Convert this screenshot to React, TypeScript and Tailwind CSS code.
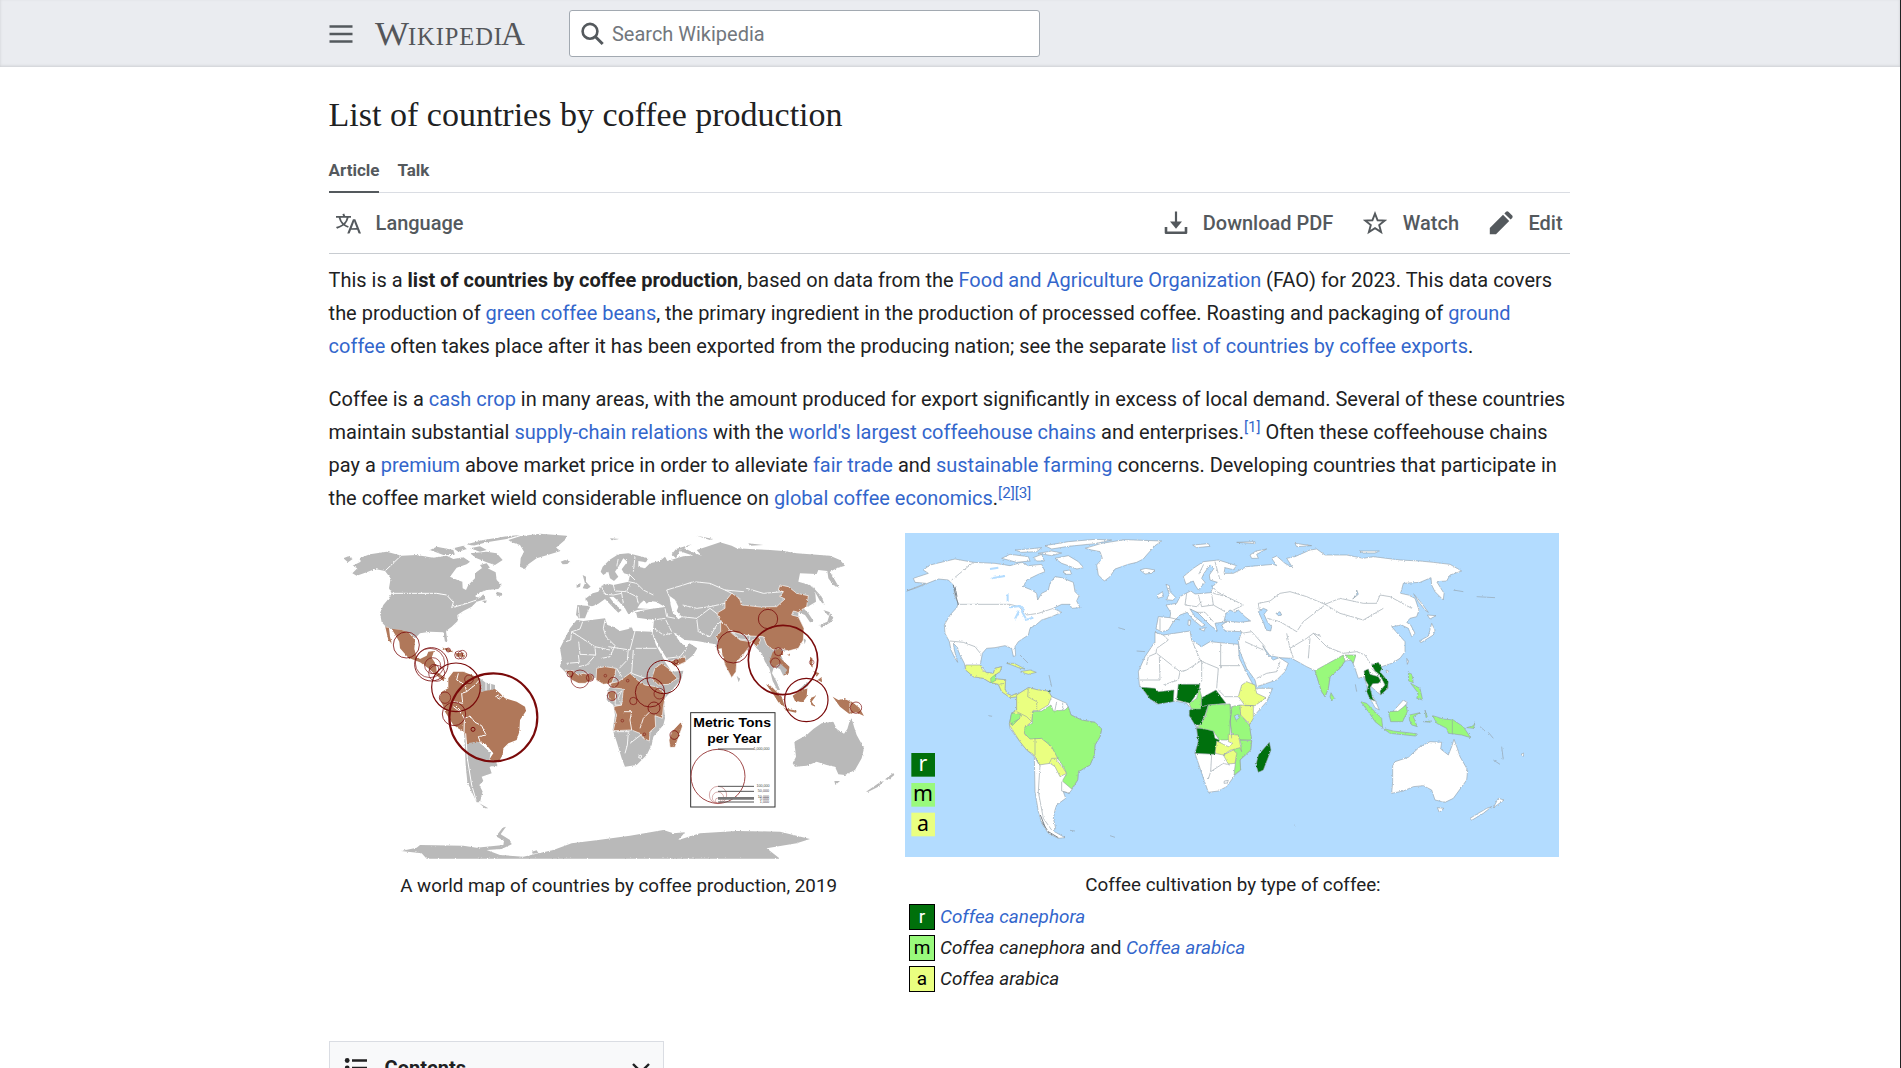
import React from "react";

const GRAY = "#b9b9b9";
const BROWN = "#b0785a";
const RING = "#7a0a0a";

function Link({ children }: { children: React.ReactNode }) {
  return <a className="text-[#3366cc]">{children}</a>;
}

function Rough({ id, scale }: { id: string; scale: number }) {
  return (
    <filter id={id} x="0" y="0" width="100%" height="100%">
      <feTurbulence type="fractalNoise" baseFrequency="0.22" numOctaves="2" seed="4" result="n" />
      <feDisplacementMap in="SourceGraphic" in2="n" scale={scale} xChannelSelector="R" yChannelSelector="G" />
    </filter>
  );
}

const americasRings: [number, number, number, number][] = [
  [259, 360, 39, 2.4], [334, 418, 50, 2.6], [330, 414, 44, 2], [338, 422, 24, 2], [350, 445, 24, 2], [342, 432, 14, 2],
  [427, 389, 13, 2], [416, 390, 12, 2], [385, 375, 6, 2], [408, 487, 73, 3.6], [520, 577, 132, 6.5], [402, 567, 35, 2.4],
  [375, 518, 17, 2], [459, 613, 6, 3], [447, 463, 13, 2],
];
const eastRings: [number, number, number, number][] = [
  [550, 366, 48, 2.6], [654, 282, 29, 2.4], [699, 405, 104, 5], [769, 525, 65, 3.6], [918, 548, 17, 2], [676, 413, 14, 2],
  [685, 380, 12, 2], [341, 456, 50, 3], [300, 502, 44, 2.6], [312, 549, 18, 2.4], [328, 506, 16, 2], [90, 462, 27, 2],
  [190, 472, 15, 2], [186, 513, 14, 2], [250, 528, 11, 2], [373, 630, 13, 2.4], [233, 467, 4, 1.5], [166, 452, 4, 1.5],
  [217, 587, 4, 1.5], [283, 628, 4, 1.5], [120, 458, 11, 2], [60, 447, 9, 2], [378, 410, 6, 2], [785, 412, 7, 1.5],
];

function ProductionMap() {
  return (
    <svg className="block h-[327px] w-[569px]" viewBox="27 24 1707 981">
      <defs><Rough id="coast-a" scale={7} /></defs>
      <g filter="url(#coast-a)" strokeLinejoin="round">
        <g fill={GRAY}>
          <path d="M97,145 112,130 98,122 122,110 118,100 150,88 200,80 245,92 290,90 340,98 380,92 400,102 430,97 450,110 440,118 410,128 390,155 414,166 427,170 428,190 438,195 445,180 465,160 465,145 485,130 500,128 527,142 530,165 545,180 535,192 500,195 470,206 465,215 480,218 490,208 498,222 470,230 455,245 430,258 412,270 413,288 395,305 378,318 382,348 375,350 370,322 330,320 300,325 285,340 265,322 245,315 215,312 198,305 185,292 180,265 190,240 205,222 215,205 207,190 212,160 195,138 165,132 140,142 110,152Z" />
          <path d="M330,75 350,65 400,75 405,90 370,90ZM400,70 430,62 440,72 415,80ZM450,70 480,64 500,75 480,80ZM440,58 490,45 560,34 600,30 560,42 500,52 460,62ZM450,85 500,80 530,85 548,105 525,120 500,112 470,100ZM480,120 500,115 510,128 488,132ZM70,100 85,94 98,102 84,112ZM530,200 548,205 545,212 530,212ZM722,110 735,105 750,109 742,117 728,118ZM485,228 500,226 498,234Z" />
          <path d="M565,45 600,34 660,26 740,32 735,45 708,68 722,78 690,88 650,100 625,118 615,132 600,125 602,100 612,80 600,60 575,52Z" />
          <path d="M480,460 495,472 525,480 525,495 482,500ZM432,620 440,652 475,650 512,682 508,705 530,712 532,724 508,724 515,745 485,755 490,768 478,780 488,800 480,832 470,832 455,800 442,770 437,720ZM478,835 505,850 495,850Z" />
          <path d="M243,978 290,968 300,960 430,962 470,968 550,960 552,948 528,934 548,908 558,905 542,928 570,945 575,958 545,972 500,975 540,990 610,995 700,975 755,955 835,945 930,932 1030,915 1060,925 1095,922 1075,945 1140,925 1250,918 1380,920 1470,942 1430,955 1340,970 1380,1001 320,1001 305,985ZM635,980 650,976 655,984 640,986Z" />
        </g>
        <g fill={BROWN}>
          <path d="M215,311 245,315 265,322 285,345 283,372 290,395 300,402 320,392 325,380 342,378 335,398 348,418 350,440 375,458 370,468 345,448 325,430 300,412 265,398 240,370 238,350ZM196,306 207,309 210,335 216,357 205,345ZM365,368 385,370 400,382 385,380ZM405,385 430,383 436,395 410,395Z" />
          <path d="M385,460 400,440 430,440 480,460 483,500 525,492 540,505 555,520 590,530 615,545 618,558 600,585 598,620 590,645 565,655 550,670 548,690 535,712 508,703 520,685 495,655 470,650 441,655 432,622 400,600 375,560 368,540 358,520 365,500 385,490Z" />
        </g>
        <g fill="none" stroke="#fff" strokeWidth="3">
          <path d="M245,90 195,138M215,205H350L380,210 400,232 395,248 425,240 470,225M415,445 410,465 435,480 440,500 425,505 428,535 400,530M478,465 465,480 440,500M400,545 420,560 433,580 432,625M433,580 450,573 465,592 485,602 498,630 475,635 480,650 512,682M405,540 425,560M498,470V496M512,476V494M437,625 442,700 455,780 468,825" />
          <path d="M527,515 535,510 545,516 538,522Z" />
        </g>
        <g transform="translate(690 0)">
          <g fill={GRAY}>
            <path d="M82,240 115,243 112,228 105,222 128,205 145,200 155,182 175,176 190,180 235,170 240,150 222,145 215,133 232,110 220,100 205,125 195,140 205,155 192,168 180,160 175,140 160,150 152,140 158,125 178,105 205,88 235,85 295,100 288,112 265,108 265,125 285,130 300,115 330,108 345,95 352,108 400,94 430,92 388,78 400,68 425,80 455,92 440,75 470,65 510,52 545,62 560,70 600,72 660,75 700,78 740,85 780,88 840,92 870,105 885,122 860,130 840,140 868,188 850,180 835,160 832,138 805,135 800,147 750,145 745,170 780,180 795,195 798,230 778,242 760,250 775,265 792,290 780,292 765,270 745,262 745,275 762,310 760,345 745,370 700,378 690,385 702,410 718,425 716,445 700,452 690,432 672,425 666,445 680,470 690,495 682,495 668,468 658,430 645,410 635,385 620,370 605,350 598,365 575,395 560,410 558,440 545,458 525,420 515,385 500,375 497,358 440,348 405,345 370,322 390,352 410,367 418,355 442,370 430,390 405,410 368,420 350,400 325,360 308,325 312,285 262,278 258,262 300,252 262,255 245,262 235,268 225,250 205,228 190,215 178,216 195,238 215,255 205,263 185,243 165,222 145,236 120,247 112,262 105,280 88,280 78,270Z" />
            <path d="M80,285 100,288 165,280 172,300 190,305 210,318 235,312 245,305 250,318 305,320 318,360 335,390 345,410 365,440 400,437 395,460 375,485 345,520 342,550 345,580 340,600 310,635 305,660 290,690 260,720 225,725 215,700 200,650 188,615 195,570 190,540 170,525 172,505 180,480 175,465 145,458 105,460 85,470 60,460 45,440 30,425 35,400 30,370 45,340 60,310Z" />
            <path d="M98,150 108,155 108,170 122,185 112,192 98,190 105,175ZM80,178 92,175 90,186 80,188ZM378,100 365,88 378,72 425,58 390,75ZM440,32 490,42 480,45ZM595,55 640,60 600,62ZM180,40 210,42 185,46ZM785,182 815,215 824,240 810,228ZM808,300 832,290 840,265 850,278 842,292 815,308ZM820,255 840,262 835,272ZM560,452 570,462 566,472ZM745,495 772,470 775,482 755,498ZM760,340 768,345 764,358Z" />
            <path d="M733,650 770,630 790,612 815,595 850,590 860,612 882,626 892,612 898,592 905,580 912,605 920,630 942,670 935,700 915,735 885,750 865,748 855,725 830,720 800,710 770,722 735,725 728,715 738,695ZM853,768 870,768 856,780ZM948,800 990,772 1002,768 985,785 955,800ZM1005,763 1030,744 1033,750 1015,765Z" />
          </g>
          <g fill="#fff">
            <path d="M262,250 270,236 282,226 290,236 300,228 318,230 345,246 300,252ZM358,212 375,224 385,245 380,258 396,276 385,283 368,262 362,240Z" />
          </g>
          <g fill={BROWN} stroke="#fff" strokeWidth="2">
            <path d="M545,205 568,220 575,240 630,246 680,245 705,222 690,215 700,200 685,195 690,180 715,185 740,205 775,212 770,245 745,262 730,258 725,270 745,275 762,310 760,345 745,370 715,378 690,370 670,375 650,360 640,335 600,333 560,330 530,310 515,290 500,265 525,250 525,230Z" />
            <path d="M512,290 530,302 545,325 570,345 600,350 625,335 632,345 620,365 605,350 598,365 575,395 560,410 558,440 545,458 525,420 515,385 500,375 505,350 498,335 512,320Z" />
            <path d="M45,435 70,438 85,450 100,445 128,450 130,464 105,475 85,475 65,465ZM140,430 165,425 198,430 195,450 185,475 160,478 138,465ZM180,475 205,470 240,445 262,465 285,480 318,485 345,505 345,520 340,545 337,580 315,572 317,605 300,620 298,648 280,640 270,625 245,615 190,617 200,570 190,545 215,540 220,492 185,488ZM172,500 198,498 195,528 178,525ZM315,430 335,415 355,430 382,460 355,478 325,480 305,460ZM358,410 405,394 408,410 375,425ZM393,590 397,605 375,667 360,667 357,645 365,620Z" />
          </g>
          <path fill={GRAY} stroke="#fff" strokeWidth="2" d="M545,320 580,330 600,332 598,345 570,342ZM215,498 205,520 215,540 195,540 198,510Z" />
          <path fill="#fff" d="M503,372 515,370 517,388ZM578,400 595,375 598,382 585,400Z" />
          <g fill={BROWN}>
            <path d="M668,382 690,368 700,384 690,398 702,410 718,425 716,445 700,452 712,435 690,415 670,428 658,410ZM648,478 665,485 695,515 705,547 685,532 668,505ZM705,550 740,557 738,563 706,556ZM728,512 745,500 772,490 770,515 758,532 735,528ZM780,520 798,512 785,530 796,545 784,540ZM848,515 865,525 882,522 905,530 928,548 942,573 918,562 898,567 870,545ZM780,395 787,400 788,428 780,418ZM790,438 808,445 800,455ZM803,465 815,456 816,472ZM712,388 720,386 718,394Z" />
          </g>
          <g fill="none" stroke="#fff" strokeWidth="2.6">
            <path d="M98,290 90,312 65,320 62,345 48,350M65,320 135,365 180,375M165,285 160,310 168,335 195,362 180,395 155,400M135,390 90,388 86,350M175,365 240,375 255,318M235,372 232,405 208,430M257,370H320M250,375 245,445 285,460M85,390 88,412 50,415M135,365 137,390 110,420 85,425M200,430 215,455M188,620 240,620M235,622 232,660 225,685M240,655 275,628M245,560 240,585 245,615M245,560 220,560M300,560 280,580 270,610" />
            <path d="M525,195 580,200 590,190 640,205 700,200M545,205 525,195 480,175 430,170 400,180 350,195 358,215M398,240 440,250 480,245 525,235M395,275 440,280 480,250 500,265M440,280 445,320 480,335 500,300 512,290M310,285 345,280 365,320M345,250 350,275 375,280M312,310 340,330 365,325M350,400 390,395 410,370M235,170 260,175 280,195 310,210M240,150 255,165M190,180 195,198 230,200 240,175M155,185 165,208 190,210 215,205M230,200 260,215 265,235M215,205 220,235M255,95 250,140M205,100 200,125M85,245 88,278M115,243 140,248M900,528V562M268,690 275,692 273,700 266,698Z" />
          </g>
        </g>
      </g>
      <g fill="none" stroke={RING}>
        {americasRings.map(([x, y, r, w], i) => <circle key={i} cx={x} cy={y} r={r} strokeWidth={w} />)}
        {eastRings.map(([x, y, r, w], i) => <circle key={i} cx={x + 690} cy={y} r={r} strokeWidth={w} />)}
      </g>
      <g transform="translate(690 0)">
        <rect x="422" y="563" width="253" height="283" fill="#fff" stroke="#333" strokeWidth="3" />
        <g fontFamily="Liberation Sans, sans-serif" fontWeight="700" fill="#000" fontSize="40">
          <text x="430" y="605" textLength="233" lengthAdjust="spacingAndGlyphs">Metric Tons</text>
          <text x="472" y="653" textLength="163" lengthAdjust="spacingAndGlyphs">per Year</text>
        </g>
        <g fill="none" stroke="#b05a5a" strokeWidth="2.4">
          <circle cx="504" cy="754" r="81" stroke="#a04848" strokeWidth="3" />
          <circle cx="504" cy="810" r="26" strokeWidth="1.6" />
          <circle cx="504" cy="818" r="17" strokeWidth="1.4" />
          <circle cx="504" cy="827" r="8" strokeWidth="1.4" />
        </g>
        <path d="M504,672H612M504,784H612M504,799H612M504,831H612" stroke="#555" strokeWidth="3" />
        <path d="M504,820H612" stroke="#777" strokeWidth="8" />
        <g fontFamily="Liberation Sans, sans-serif" fontSize="11" fill="#444" textAnchor="end">
          <text x="659" y="674">1,000,000</text>
          <text x="659" y="786">100,000</text>
          <text x="657" y="801">50,000</text>
          <text x="657" y="818">10,000</text>
          <text x="657" y="825">5,000</text>
          <text x="657" y="835">1,000</text>
        </g>
      </g>
    </svg>
  );
}

const DARK = "#00700b";
const MID = "#99f97c";
const PALE = "#eaff80";
const SEA = "#b3dcff";

function CultivationMap() {
  return (
    <svg className="block h-[324px] w-[654px]" viewBox="30 24 1962 972">
      <defs><Rough id="coast-b" scale={7} /></defs>
      <rect x="0" y="0" width="2000" height="1000" fill={SEA} />
      <g filter="url(#coast-b)" strokeLinejoin="round" stroke="#929da6" strokeWidth="1.8">
        <g fill="#fff">
          <path d="M35,198 75,182 92,175 60,172 55,160 85,150 100,145 85,135 105,120 180,102 235,112 300,115 345,122 380,112 400,122 440,118 450,140 430,148 395,165 385,185 410,195 425,205 428,225 440,205 460,195 465,175 480,155 500,158 535,172 540,200 552,212 545,228 555,248 530,250 525,238 500,238 475,250 500,262 470,275 440,285 425,298 405,310 400,330 370,350 360,365 362,392 355,395 350,370 330,362 300,368 275,370 262,385 256,420 275,443 295,445 300,430 320,425 315,440 300,450 302,462 332,464 330,490 335,505 350,512 365,505 368,515 345,518 320,500 310,478 285,472 265,460 235,455 212,435 208,415 195,390 185,365 175,355 178,375 188,412 180,400 168,375 163,350 150,325 148,300 165,270 185,248 190,235 180,215 175,180 160,165 130,162 105,172 60,190Z" />
          <path d="M320,100 345,88 400,95 405,108 365,112ZM360,75 400,72 440,68 425,80 380,82ZM415,98 440,88 448,108 425,108ZM430,85 470,78 500,84 470,92ZM450,62 520,50 600,43 650,45 600,56 520,64 470,72ZM480,100 520,92 550,110 566,128 545,132 520,122 500,115ZM505,138 525,135 530,148 510,148ZM735,135 752,130 780,135 770,145 750,147Z" />
          <path d="M570,70 620,55 690,44 800,48 780,62 755,90 745,102 725,112 700,118 660,132 645,155 628,168 610,150 605,120 622,100 615,80 590,75Z" />
          <path d="M365,510 400,488 430,495 460,498 470,515 515,535 528,570 560,585 600,592 620,612 615,635 600,660 598,690 585,720 550,740 548,765 530,795 522,805 505,800 512,820 485,840 480,855 475,880 482,910 475,918 510,938 490,940 460,925 440,895 430,860 420,800 418,695 395,675 375,650 345,610 343,595 350,565 365,555Z" />
        </g>
        <path fill={PALE} d="M212,420H257L262,435 275,443 295,445 300,430 320,425 315,440 300,450 302,462 332,464 330,490 335,505 350,512 365,505 368,515 345,518 320,500 310,478 285,472 265,460 235,455 212,435ZM335,415 358,415 390,432 375,430 350,420ZM375,440 405,435 424,442 400,448Z" />
        <path fill={PALE} d="M365,510 400,488 430,495 460,498 470,515 460,540 430,558 415,556 410,590 392,605 390,630 420,640 440,640 470,665 488,695 485,705 505,730 515,745 495,755 480,725 465,715 432,720 418,690 395,675 375,650 343,600 350,565 365,555Z" />
        <path fill={MID} d="M412,560 440,558 468,540 475,558 510,555 520,545 528,570 560,585 600,592 620,612 615,635 600,660 598,690 585,720 550,740 548,765 530,792 502,768 515,745 505,725 488,700 470,665 440,640 405,642 388,625 390,605 412,595ZM350,563 377,568 374,580 352,602 345,590ZM287,460 302,448 302,466 288,474Z" />
        <path fill={DARK} d="M462,496h4v5h-4z" />
        <g fill="none">
          <path d="M235,112 170,165M190,238H345L372,245 395,270 430,265 475,250M165,348 205,352 240,365 256,385M400,490 398,515 425,530 425,556M365,560 395,575 410,590M420,640V690M463,715 470,700 490,700M420,700 435,720 430,800 445,880 470,915M500,770V798L525,805M485,530 480,555M503,533V555M345,598 375,580M310,478 330,475" />
          <path d="M175,180 182,210 190,240M180,185 186,215M440,890 460,920 490,938M436,870 450,905" stroke="#7c868f" strokeWidth="3" />
        </g>
        <g fill="none" stroke={SEA} strokeWidth="6">
          <path d="M345,247 375,243 388,256M360,282 372,258M380,258 392,280M390,285 415,278M285,132 310,128M290,160 330,153M338,208V230" />
        </g>
        <g transform="translate(705 0)">
          <g fill="#fff">
            <path d="M85,275 120,278 122,262 108,240 140,235 150,215 168,205 182,198 195,207 242,203 252,180 262,172 240,165 238,150 252,130 240,120 222,145 215,160 225,172 205,195 195,180 190,168 168,178 160,155 190,130 220,110 265,105 320,122 310,134 285,128 282,145 310,145 330,135 350,125 385,122 430,118 440,122 425,100 440,93 465,115 488,128 470,100 495,95 540,75 560,72 585,90 650,90 700,100 730,95 810,105 870,108 910,112 960,118 995,138 960,150 950,168 920,170 942,205 940,225 915,200 905,180 903,158 870,172 820,175 812,205 835,210 855,220 867,255 860,275 840,280 830,292 842,300 855,325 845,335 835,310 815,300 785,305 798,320 825,350 825,380 810,400 785,415 755,425 748,440 770,465 775,490 750,508 735,495 720,482 716,495 735,525 748,555 735,548 715,510 710,480 702,455 685,460 675,430 665,405 645,408 630,430 600,455 595,490 585,515 575,500 555,437 530,425 485,400 450,398 420,392 398,362 412,388 430,405 448,398 475,415 465,440 440,465 380,485 375,465 350,430 330,380 325,350 335,320 285,318 275,300 290,290 255,295 262,318 240,300 220,280 202,262 180,252 195,275 225,300 215,305 190,285 172,262 150,270 130,290 115,315 95,320 78,312Z" />
            <path d="M75,322 100,330 180,318 185,345 215,365 240,350 260,352 325,358 328,400 348,440 375,490 428,490 410,530 370,575 358,600 365,650 362,675 330,705 332,735 315,750 290,785 265,798 235,802 222,765 195,685 205,650 200,605 178,570 182,550 170,535 135,528 80,537 55,515 28,480 25,440 45,395 75,350Z" />
            <path d="M108,178 118,182 120,200 138,218 128,226 108,224 118,208ZM82,210 98,200 100,215 84,220ZM365,100 360,90 378,78 410,72 380,88 385,100ZM188,60 235,56 240,64 200,68ZM320,52 375,50 375,56ZM495,55 545,62 500,65ZM688,78 748,78 735,84 700,84ZM852,208 875,235 895,262 885,255 865,230ZM868,348 895,333 905,295 915,315 910,330 875,352ZM892,270 918,272 900,282ZM830,400 836,408 832,418ZM768,435 776,438 770,444ZM175,285 182,285 180,302 174,300ZM208,312 226,308 222,318Z" />
            <path d="M788,722 795,710 835,697 870,665 900,650 935,652 932,672 955,690 965,665 972,643 982,670 990,695 1013,735 1010,765 970,820 945,832 915,825 905,795 880,782 850,785 820,798 785,805 788,770ZM922,848 942,850 928,862ZM1020,880 1070,850 1085,845 1060,865 1025,886ZM1090,848 1105,820 1122,825ZM788,560 820,525 832,533 810,560ZM1173,688 1182,684 1180,694Z" />
          </g>
          <path fill={SEA} d="M282,288 288,265 300,255 315,262 325,255 345,275 362,288 330,292ZM385,260 400,250 412,255 402,268 412,290 425,305 422,318 408,315 400,292ZM310,578 325,568 328,580 318,586ZM438,265 450,260 455,270 445,272ZM680,195 685,208 668,222 680,210Z" />
          <g fill="none">
            <path d="M385,235 420,228 450,205 480,200 530,215 585,238 630,220 700,235 740,235 750,210 780,215 845,250M585,238 630,265 700,285 760,250M385,235 388,255M412,280 450,290 500,320 520,290 585,240M470,325 480,370 530,340 550,325 575,335M550,325 590,365 640,385 680,380M480,370 490,398M540,340 535,400M335,325 365,320 405,365M345,350 400,375M380,460 410,445 440,440 450,410M680,380 705,390 720,415 755,425M725,430 760,465M250,205 290,215 340,240 310,255M245,180 260,200 290,215M170,205 165,240 200,245 215,230M205,210 215,245 250,240 245,205M250,240 285,260M255,110 270,165M220,120 205,150M90,280V315M120,278 150,285M200,262 225,262 250,290" />
            <path d="M100,330 115,345 80,370 78,385 55,395 50,420M80,385 150,440 170,435 212,408 185,345M88,395 90,465 30,465M150,440 145,465 100,480M272,355V430M272,422H330M212,408 265,430 260,490M265,495 285,515 325,515M215,410 215,470M245,688 242,740 235,762M242,740 280,715 300,720M283,768 295,766 292,774 282,775Z" />
          </g>
          <path fill={DARK} d="M35,487 75,490 85,500 132,495 130,530 85,537 60,522ZM145,478 210,478 205,500 180,535 140,525ZM212,520 258,495 288,535 235,540 215,545ZM178,555 235,540 225,570 210,600 195,600 178,572ZM200,610 225,610 250,618 255,640 268,645 255,688 195,685 205,650ZM418,652 423,675 400,735 385,742 378,720 385,690Z" />
          <path fill={MID} d="M208,490 215,515 212,552 185,552 178,537 200,520ZM235,540 300,537 305,560 300,590 300,645 268,645 250,618 200,607 215,595 228,570ZM305,545 330,540 332,570 358,600 365,645 330,645 305,625 300,590ZM330,645 365,647 362,675 330,705 332,735 312,750 318,700 310,670 335,665Z" />
          <path fill={PALE} d="M335,480 350,470 375,480 380,505 408,518 375,542 345,542 325,515ZM330,540 370,542 370,580 360,598 332,570ZM260,648 295,665 308,655 295,650 295,628 325,630 335,680 330,668 300,676 280,690 255,685ZM280,690 310,675 320,685 315,715 295,717Z" />
          <path fill={SEA} d="M313,572 325,568 328,578 318,586Z" />
          <path fill={MID} d="M555,437 600,412 640,390 645,408 630,430 600,455 595,490 585,515 575,500ZM645,390 678,390 670,415 662,405ZM603,503 613,520 605,528 600,515ZM692,530 710,535 755,580 758,608 735,590 715,560ZM758,610 790,618 860,626 855,633 780,625ZM775,560 805,558 828,540 832,560 818,590 782,590ZM838,570 870,563 850,575 862,605 845,600 838,585ZM908,572 928,578 940,582 970,585 1000,605 1022,638 995,630 955,625 950,610 920,595ZM835,443 846,448 850,473 836,468ZM842,475 870,490 878,525 860,520 865,505ZM1010,608 1030,602 1036,592 1030,610ZM885,555 892,575 888,578ZM880,590 905,588 900,592Z" />
          <path fill={DARK} d="M702,438 715,432 720,448 745,455 752,468 745,475 728,476 720,488 728,520 735,528 720,522 710,500 715,480 706,465ZM725,420 745,412 756,430 750,440 775,470 773,490 752,510 750,498 765,480 750,450 735,438Z" />
          <path fill="none" d="M967,587V628M300,537 302,600 305,640M1050,605 1065,618M1075,622 1090,640M1115,665 1120,705M1090,705 1110,718M970,195 1000,200M1040,215 1095,218M676,478 680,500" />
        </g>
        <path fill="none" d="M462,450 470,485M375,390 400,415M670,308 690,314M725,378 750,380M280,572 292,574M525,916 540,918M645,932 660,937M1198,900 1203,903" />
      </g>
      <g fontFamily="Noto Sans, sans-serif" fontSize="64" textAnchor="middle">
        <rect x="49" y="684" width="71" height="71" fill={DARK} />
        <rect x="49" y="774" width="71" height="71" fill={MID} />
        <rect x="49" y="863" width="71" height="71" fill={PALE} />
        <text x="84" y="738" fill="#fff">r</text>
        <text x="84" y="827" fill="#000">m</text>
        <text x="84" y="917" fill="#000">a</text>
      </g>
    </svg>
  );
}

function Swatch({ letter, tone }: { letter: string; tone: string }) {
  return <span className={`flex h-[26px] w-[26px] items-center justify-center border border-black text-[19px] leading-none ${tone}`}>{letter}</span>;
}

export default function App() {
  return (
    <div className="h-[1068px] overflow-hidden border-r border-[#202122] bg-white font-['Roboto',sans-serif] text-[19.98px] leading-[33px] text-[#202122]">
      <header className="h-[67px] bg-[#eaecf0] shadow-[inset_0_-1px_3px_rgba(0,0,0,0.12)]">
        <div className="ml-[329px] flex h-[67px] items-center">
          <svg className="h-[24px] w-[24px]" viewBox="0 0 24 24" fill="#54595d">
            <path d="M0.500 3.2h23v2.5h-23zM0.500 10.8h23v2.5h-23zM0.500 18.3h23v2.5h-23z" />
          </svg>
          <svg className="ml-[21px] h-[40px] w-[152px]" viewBox="0 0 152 40" fontFamily="Liberation Serif, serif" fill="#54565a">
            <text x="1" y="31" fontSize="33" textLength="34" lengthAdjust="spacingAndGlyphs">W</text>
            <text x="34" y="31" fontSize="24.5" textLength="94" lengthAdjust="spacing">IKIPEDI</text>
            <text x="127" y="31" fontSize="33" textLength="24" lengthAdjust="spacingAndGlyphs">A</text>
          </svg>
          <div className="ml-[43px] flex h-[47px] w-[471px] items-center rounded-[3px] border border-[#a2a9b1] bg-white pl-[11px] text-[#72777d]">
            <svg className="h-[24px] w-[24px]" viewBox="0 0 24 24" fill="none" stroke="#54595d" strokeWidth="2.6">
              <circle cx="9" cy="9.3" r="7.4" />
              <path d="M14.2 14.5 21.7 22" strokeWidth="3" />
            </svg>
            <span className="ml-[7px] pt-px">Search Wikipedia</span>
          </div>
        </div>
      </header>

      <main className="ml-[328.6px] w-[1241px]">
        <h1 className="pt-[26px] font-['Liberation_Serif',serif] text-[34px] leading-[44px]">List of countries by coffee production</h1>

        <nav className="mt-[17px] flex h-[39px] gap-[18px] border-b border-[#dadde3] text-[17px] font-bold leading-[32px] text-[#54595d]">
          <span className="h-[39px] border-b-2 border-[#54595d]">Article</span>
          <span>Talk</span>
        </nav>

        <div className="flex h-[61px] items-center border-b border-[#c8ccd1] pl-[7px] pr-[7px] font-medium text-[#54595d]">
          <svg className="h-[25px] w-[25px]" viewBox="0 0 20 20" fill="#54595d">
            <path d="M20 18h-1.44a.6.6 0 0 1-.4-.12.8.8 0 0 1-.23-.31L17 15h-5l-1 2.54a.8.8 0 0 1-.22.3.6.6 0 0 1-.4.14H9l4.55-11.47h1.89zm-3.53-4.31L14.89 9.5a12 12 0 0 1-.39-1.24q-.09.37-.19.69l-.19.56-1.58 4.19zm-6.3-1.58a13.4 13.4 0 0 1-2.91-1.41 11.46 11.46 0 0 0 2.81-5.37H12V4H7.31a4 4 0 0 0-.2-.56C6.87 2.79 6.6 2 6.6 2l-1.47.5s.4.89.6 1.5H0v1.33h2.15A11.23 11.23 0 0 0 5 10.7a17.2 17.2 0 0 1-5 2.1q.56.82.87 1.38a23.3 23.3 0 0 0 5.22-2.51 15.6 15.6 0 0 0 3.56 1.77zM3.63 5.33h4.91a8.1 8.1 0 0 1-2.45 4.45 9.1 9.1 0 0 1-2.46-4.45" />
          </svg>
          <span className="ml-[15px]">Language</span>
          <div className="ml-auto flex items-center">
            <svg className="h-[24px] w-[24px]" viewBox="0 0 24 24">
              <path d="M12 0.5V12" stroke="#54595d" strokeWidth="2.2" />
              <path d="M6 10.5H18L12 17.8Z" fill="#54595d" />
              <path d="M2 16V21.8H22V16" fill="none" stroke="#54595d" strokeWidth="2.6" strokeLinejoin="round" />
            </svg>
            <span className="ml-[15px]">Download PDF</span>
            <svg className="ml-[30px] h-[24px] w-[24px]" viewBox="0 0 24 24" fill="none" stroke="#54595d" strokeWidth="1.9">
              <path d="M12 2.6 14.6 9.3 21.8 9.6 16.2 14.1 18.1 21 12 17.1 5.9 21 7.8 14.1 2.2 9.6 9.4 9.3Z" />
            </svg>
            <span className="ml-[15.5px]">Watch</span>
            <svg className="ml-[30px] h-[24px] w-[24px]" viewBox="0 0 24 24" fill="#54595d">
              <path d="M14 3.8 20.2 10 7 23.2H.8V17ZM15.4 2.4 17 .8a2 2 0 0 1 2.4 0L23.2 4.600a2 2 0 0 1 0 2.400L21.600 8.600Z" />
            </svg>
            <span className="ml-[15.5px]">Edit</span>
          </div>
        </div>

        <p className="mt-[10px] whitespace-nowrap">
          This is a <b>list of countries by coffee production</b>, based on data from the <Link>Food and Agriculture Organization</Link> (FAO) for 2023. This data covers<br />
          the production of <Link>green coffee beans</Link>, the primary ingredient in the production of processed coffee. Roasting and packaging of <Link>ground</Link><br />
          <Link>coffee</Link> often takes place after it has been exported from the producing nation; see the separate <Link>list of countries by coffee exports</Link>.
        </p>
        <p className="mt-[20px] whitespace-nowrap">
          Coffee is a <Link>cash crop</Link> in many areas, with the amount produced for export significantly in excess of local demand. Several of these countries<br />
          maintain substantial <Link>supply-chain relations</Link> with the <Link>world's largest coffeehouse chains</Link> and enterprises.<sup className="-top-[7px] text-[15.2px] leading-none"><Link>[1]</Link></sup> Often these coffeehouse chains<br />
          pay a <Link>premium</Link> above market price in order to alleviate <Link>fair trade</Link> and <Link>sustainable farming</Link> concerns. Developing countries that participate in<br />
          the coffee market wield considerable influence on <Link>global coffee economics</Link>.<sup className="-top-[7px] text-[15.2px] leading-none"><Link>[2][3]</Link></sup>
        </p>

        <div className="mt-[18px] flex">
          <figure className="w-[576.4px]">
            <ProductionMap />
            <figcaption className="mt-[10px] w-[580px] text-center text-[18.8px]">A world map of countries by coffee production, 2019</figcaption>
          </figure>
          <figure className="w-[654px]">
            <CultivationMap />
            <figcaption className="text-[18.9px] leading-[31px]">
              <div className="mt-[12px] pl-[2px] text-center text-[18.8px] leading-[33px]">Coffee cultivation by type of coffee:</div>
              <div className="-mt-px ml-[4px] flex h-[31px] items-center gap-[5px]"><Swatch letter="r" tone="bg-[#00700b] text-white" /><i className="-mt-px"><Link>Coffea canephora</Link></i></div>
              <div className="ml-[4px] flex h-[31px] items-center gap-[5px]"><Swatch letter="m" tone="bg-[#99f97c] text-black" /><span className="-mt-px"><i>Coffea canephora</i> and <i><Link>Coffea arabica</Link></i></span></div>
              <div className="ml-[4px] flex h-[31px] items-center gap-[5px]"><Swatch letter="a" tone="bg-[#eaff80] text-black" /><i className="-mt-px">Coffea arabica</i></div>
            </figcaption>
          </figure>
        </div>

        <div className="mt-[47px] flex h-[54px] w-[335px] items-center border border-[#dadde3] bg-[#f8f9fa] pl-[14px] pr-[12px]">
          <svg className="h-[24px] w-[24px]" viewBox="0 0 24 24" fill="#202122">
            <circle cx="3.200" cy="4.500" r="2.400" /><circle cx="3.200" cy="12" r="2.400" /><circle cx="3.200" cy="19.500" r="2.400" />
            <path d="M8 3.300H23V5.700H8zM8 10.800H23V13.200H8zM8 18.300H23V20.700H8z" />
          </svg>
          <span className="ml-[17px] text-[20px] font-bold">Contents</span>
          <svg className="ml-auto h-[20px] w-[20px]" viewBox="0 0 20 20" fill="none" stroke="#202122" strokeWidth="2.400"><path d="M2 6 10 14 18 6" /></svg>
        </div>
      </main>
    </div>
  );
}
